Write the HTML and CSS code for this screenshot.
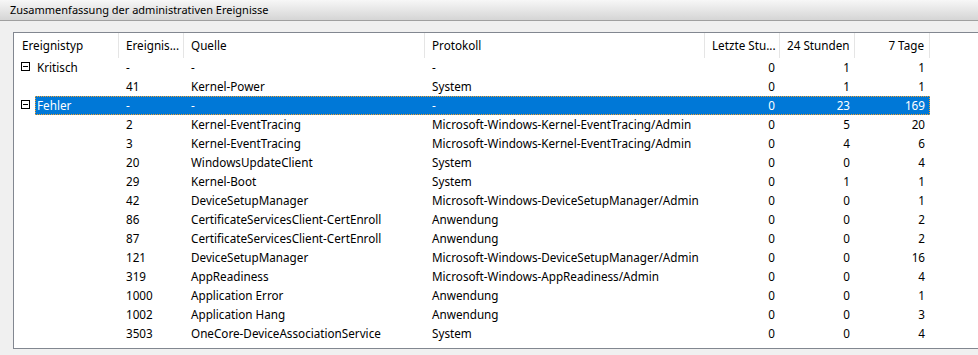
FILE: index.html
```html
<!DOCTYPE html>
<html lang="de">
<head>
    <meta charset="UTF-8">
    <title>Zusammenfassung der administrativen Ereignisse</title>
    <link rel="stylesheet" href="styles.css">
</head>
<body>
    <div class="title-bar">Zusammenfassung der administrativen Ereignisse</div>

    <div class="content">
        <div class="list-view">
            <div class="list-header">
                <div class="col">Ereignistyp</div>
                <div class="col">Ereignis...</div>
                <div class="col">Quelle</div>
                <div class="col">Protokoll</div>
                <div class="col num">Letzte Stu...</div>
                <div class="col num">24 Stunden</div>
                <div class="col num">7 Tage</div>
            </div>

            <div class="row">
                <div class="twisty"><span class="expander"></span></div>
                <div class="cells">
                    <div>Kritisch</div><div>-</div><div>-</div><div>-</div>
                    <div class="num">0</div><div class="num">1</div><div class="num">1</div>
                </div>
            </div>
            <div class="row">
                <div class="twisty"></div>
                <div class="cells">
                    <div></div><div>41</div><div>Kernel-Power</div><div>System</div>
                    <div class="num">0</div><div class="num">1</div><div class="num">1</div>
                </div>
            </div>
            <div class="row">
                <div class="twisty"><span class="expander"></span></div>
                <div class="cells selected">
                    <div>Fehler</div><div>-</div><div>-</div><div>-</div>
                    <div class="num">0</div><div class="num">23</div><div class="num">169</div>
                </div>
            </div>
            <div class="row">
                <div class="twisty"></div>
                <div class="cells">
                    <div></div><div>2</div><div>Kernel-EventTracing</div><div>Microsoft-Windows-Kernel-EventTracing/Admin</div>
                    <div class="num">0</div><div class="num">5</div><div class="num">20</div>
                </div>
            </div>
            <div class="row">
                <div class="twisty"></div>
                <div class="cells">
                    <div></div><div>3</div><div>Kernel-EventTracing</div><div>Microsoft-Windows-Kernel-EventTracing/Admin</div>
                    <div class="num">0</div><div class="num">4</div><div class="num">6</div>
                </div>
            </div>
            <div class="row">
                <div class="twisty"></div>
                <div class="cells">
                    <div></div><div>20</div><div>WindowsUpdateClient</div><div>System</div>
                    <div class="num">0</div><div class="num">0</div><div class="num">4</div>
                </div>
            </div>
            <div class="row">
                <div class="twisty"></div>
                <div class="cells">
                    <div></div><div>29</div><div>Kernel-Boot</div><div>System</div>
                    <div class="num">0</div><div class="num">1</div><div class="num">1</div>
                </div>
            </div>
            <div class="row">
                <div class="twisty"></div>
                <div class="cells">
                    <div></div><div>42</div><div>DeviceSetupManager</div><div>Microsoft-Windows-DeviceSetupManager/Admin</div>
                    <div class="num">0</div><div class="num">0</div><div class="num">1</div>
                </div>
            </div>
            <div class="row">
                <div class="twisty"></div>
                <div class="cells">
                    <div></div><div>86</div><div>CertificateServicesClient-CertEnroll</div><div>Anwendung</div>
                    <div class="num">0</div><div class="num">0</div><div class="num">2</div>
                </div>
            </div>
            <div class="row">
                <div class="twisty"></div>
                <div class="cells">
                    <div></div><div>87</div><div>CertificateServicesClient-CertEnroll</div><div>Anwendung</div>
                    <div class="num">0</div><div class="num">0</div><div class="num">2</div>
                </div>
            </div>
            <div class="row">
                <div class="twisty"></div>
                <div class="cells">
                    <div></div><div>121</div><div>DeviceSetupManager</div><div>Microsoft-Windows-DeviceSetupManager/Admin</div>
                    <div class="num">0</div><div class="num">0</div><div class="num">16</div>
                </div>
            </div>
            <div class="row">
                <div class="twisty"></div>
                <div class="cells">
                    <div></div><div>319</div><div>AppReadiness</div><div>Microsoft-Windows-AppReadiness/Admin</div>
                    <div class="num">0</div><div class="num">0</div><div class="num">4</div>
                </div>
            </div>
            <div class="row">
                <div class="twisty"></div>
                <div class="cells">
                    <div></div><div>1000</div><div>Application Error</div><div>Anwendung</div>
                    <div class="num">0</div><div class="num">0</div><div class="num">1</div>
                </div>
            </div>
            <div class="row">
                <div class="twisty"></div>
                <div class="cells">
                    <div></div><div>1002</div><div>Application Hang</div><div>Anwendung</div>
                    <div class="num">0</div><div class="num">0</div><div class="num">3</div>
                </div>
            </div>
            <div class="row">
                <div class="twisty"></div>
                <div class="cells">
                    <div></div><div>3503</div><div>OneCore-DeviceAssociationService</div><div>System</div>
                    <div class="num">0</div><div class="num">0</div><div class="num">4</div>
                </div>
            </div>
        </div>
    </div>
</body>
</html>
```

FILE: styles.css
```css
body {
    margin: 0;
    background: #f0f0f0;
    font-family: 'Noto Sans', 'Liberation Sans', sans-serif;
    font-size: 11.7px;
    color: #000;
    overflow: hidden;
}

.title-bar {
    height: 20px;
    line-height: 19px;
    padding-left: 10px;
    font-size: 11px;
    background: linear-gradient(#f7f7f7, #d5d5d5);
    border-bottom: 1px solid #a0a0a0;
    white-space: nowrap;
}

.content {
    padding: 11px 0 0 13px;
}

.list-view {
    height: 315px;
    background: #ffffff;
    border: 1px solid #828790;
    border-right: none;
}

.list-header {
    display: grid;
    grid-template-columns: 105px 65px 241px 280px 75px 75px 75px;
    height: 25px;
}

.list-header .col {
    line-height: 25px;
    padding: 0 5px 0 7px;
    border-right: 1px solid #e5e5e5;
    white-space: nowrap;
    overflow: hidden;
}

.list-header .col:first-child {
    padding-left: 8px;
}

.row {
    display: flex;
    height: 19px;
}

.twisty {
    width: 21px;
    flex-shrink: 0;
    position: relative;
}

.expander {
    position: absolute;
    left: 7px;
    top: 4px;
    width: 7px;
    height: 7px;
    border: 1px solid #000;
}

.expander::after {
    content: "";
    position: absolute;
    left: 1px;
    top: 3px;
    width: 5px;
    height: 1px;
    background: #000;
}

.cells {
    display: grid;
    grid-template-columns: 84px 65px 241px 280px 75px 75px 75px;
    line-height: 19px;
    box-sizing: border-box;
}

.cells > div {
    padding: 0 6px 0 7px;
    white-space: nowrap;
    overflow: hidden;
}

.cells > div:first-child {
    padding-left: 2px;
}

.num {
    text-align: right;
}

.cells .num {
    padding-right: 5px;
}

.cells.selected {
    background: #0078d7;
    color: #ffffff;
    outline: 1px dotted #f0a030;
    outline-offset: -1px;
}
```
